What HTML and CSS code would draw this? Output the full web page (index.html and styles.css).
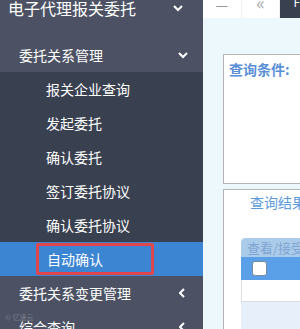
FILE: index.html
```html
<!DOCTYPE html>
<html lang="zh-CN">
  <head>
    <meta charset="UTF-8" />
    <title>自动确认</title>
    <link rel="stylesheet" href="styles.css">
  </head>
  <body>
    <div class="sidebar">
      <div class="menu-item top-item">
        <span>电子代理报关委托</span>
        <svg class="arrow" width="10" height="7" viewBox="0 0 10 7"><polyline points="1,1 5,5 9,1" /></svg>
      </div>
      <div class="menu-item group-item">
        <span>委托关系管理</span>
        <svg class="arrow" width="10" height="7" viewBox="0 0 10 7"><polyline points="1,1 5,5 9,1" /></svg>
      </div>
      <ul class="submenu">
        <li>报关企业查询</li>
        <li>发起委托</li>
        <li>确认委托</li>
        <li>签订委托协议</li>
        <li>确认委托协议</li>
        <li class="active"><span class="mark">自动确认</span></li>
      </ul>
      <div class="menu-item group-item">
        <span>委托关系变更管理</span>
        <svg class="arrow left" width="7" height="10" viewBox="0 0 7 10"><polyline points="5,1 1,5 5,9" /></svg>
      </div>
      <div class="menu-item group-item">
        <span>综合查询</span>
        <svg class="arrow left" width="7" height="10" viewBox="0 0 7 10"><polyline points="5,1 1,5 5,9" /></svg>
      </div>
      <div class="watermark">© 亿速云</div>
    </div>

    <div class="main">
      <div class="topbar">
        <div class="tool">—</div>
        <div class="tool back">«</div>
        <div class="tab">F</div>
      </div>
      <div class="content">
        <div class="box query-box">
          <div class="box-title">查询条件:</div>
        </div>
        <div class="box result-box">
          <div class="box-title result-title">查询结果列表</div>
          <div class="grid">
            <div class="grid-btn">查看/接受委托</div>
            <div class="grid-head"><span class="check"></span></div>
            <div class="grid-row"></div>
          </div>
        </div>
      </div>
    </div>
  </body>
</html>
```

FILE: styles.css
```css
body,
ul,
li {
  margin: 0;
  padding: 0;
}

body {
  font-family: "Noto Sans CJK SC", "Microsoft YaHei", sans-serif;
  display: flex;
  width: 300px;
  height: 329px;
  overflow: hidden;
  background-color: #edf8fd;
}

/* Sidebar */
.sidebar {
  width: 203px;
  flex-shrink: 0;
  background-color: #4c5264;
  color: #ffffff;
  position: relative;
  overflow: hidden;
}

.menu-item {
  display: flex;
  align-items: center;
  justify-content: space-between;
}

.top-item {
  height: 38px;
  margin-top: -11px;
  margin-bottom: 11px;
  padding: 0 20px 0 8px;
  font-size: 16px;
}

.group-item {
  height: 34px;
  padding: 0 15px 0 19px;
  font-size: 14px;
}

.arrow polyline {
  fill: none;
  stroke: #ffffff;
  stroke-width: 2;
}

.arrow.left {
  margin-right: 2px;
}

.submenu {
  list-style: none;
  background-color: #394050;
}

.submenu li {
  height: 34px;
  line-height: 34px;
  padding-left: 46px;
  font-size: 14px;
}

.submenu li.active {
  background-color: #3b85d2;
  padding-left: 36px;
  display: flex;
  align-items: center;
}

.mark {
  display: block;
  width: 104px;
  height: 26px;
  line-height: 26px;
  padding-left: 8px;
  border: 3px solid #e0474c;
  border-radius: 2px;
}

.watermark {
  position: absolute;
  left: 5px;
  bottom: 7px;
  font-size: 7px;
  color: rgba(255, 255, 255, 0.25);
}

/* Main */
.main {
  flex: 1;
  display: flex;
  flex-direction: column;
  min-width: 0;
  overflow: hidden;
}

.topbar {
  height: 18px;
  flex-shrink: 0;
  display: flex;
  background-color: #ffffff;
  overflow: hidden;
}

.tool {
  width: 40px;
  border-right: 1px solid #f0f0f0;
  color: #999999;
  font-size: 14px;
  line-height: 8px;
  text-align: center;
}

.tool.back {
  font-size: 18px;
  line-height: 4px;
  color: #aaaaaa;
}

.tab {
  flex: 1;
  background-color: #394050;
  color: #ffffff;
  font-size: 12px;
  line-height: 4px;
  padding-left: 13px;
}

.content {
  flex: 1;
  min-height: 0;
  padding: 36px 0 0 20px;
  overflow: hidden;
}

.box {
  background-color: #ffffff;
  border: 1px solid #b4b4b4;
  border-right: none;
}

.query-box {
  height: 128px;
  margin-bottom: 5px;
}

.box-title {
  color: #5a8fd8;
  font-size: 14px;
  font-weight: bold;
  padding: 4px 0 0 5px;
  white-space: nowrap;
}

.result-box {
  height: 139px;
  border-bottom: none;
}

.result-title {
  font-weight: normal;
  color: #5d9adb;
  padding: 2px 0 0 26px;
  height: 48px;
  box-sizing: border-box;
}

.grid {
  margin-left: 17px;
  height: 91px;
  background-color: #e6effa;
}

.grid-btn {
  height: 19px;
  line-height: 19px;
  background-color: #abcbeb;
  color: #7fa5d0;
  font-size: 13px;
  padding-left: 6px;
  border-radius: 5px 0 0 0;
  white-space: nowrap;
}

.grid-head {
  height: 23px;
  background-color: #5aa0e8;
  display: flex;
  align-items: center;
  padding-left: 11px;
}

.check {
  width: 13px;
  height: 13px;
  background-color: #ffffff;
  border: 1px solid #7a8aa0;
  border-radius: 3px;
}

.grid-row {
  height: 21px;
  background-color: #ffffff;
  border-bottom: 1px solid #dddddd;
  border-left: 1px solid #dddddd;
}
```
